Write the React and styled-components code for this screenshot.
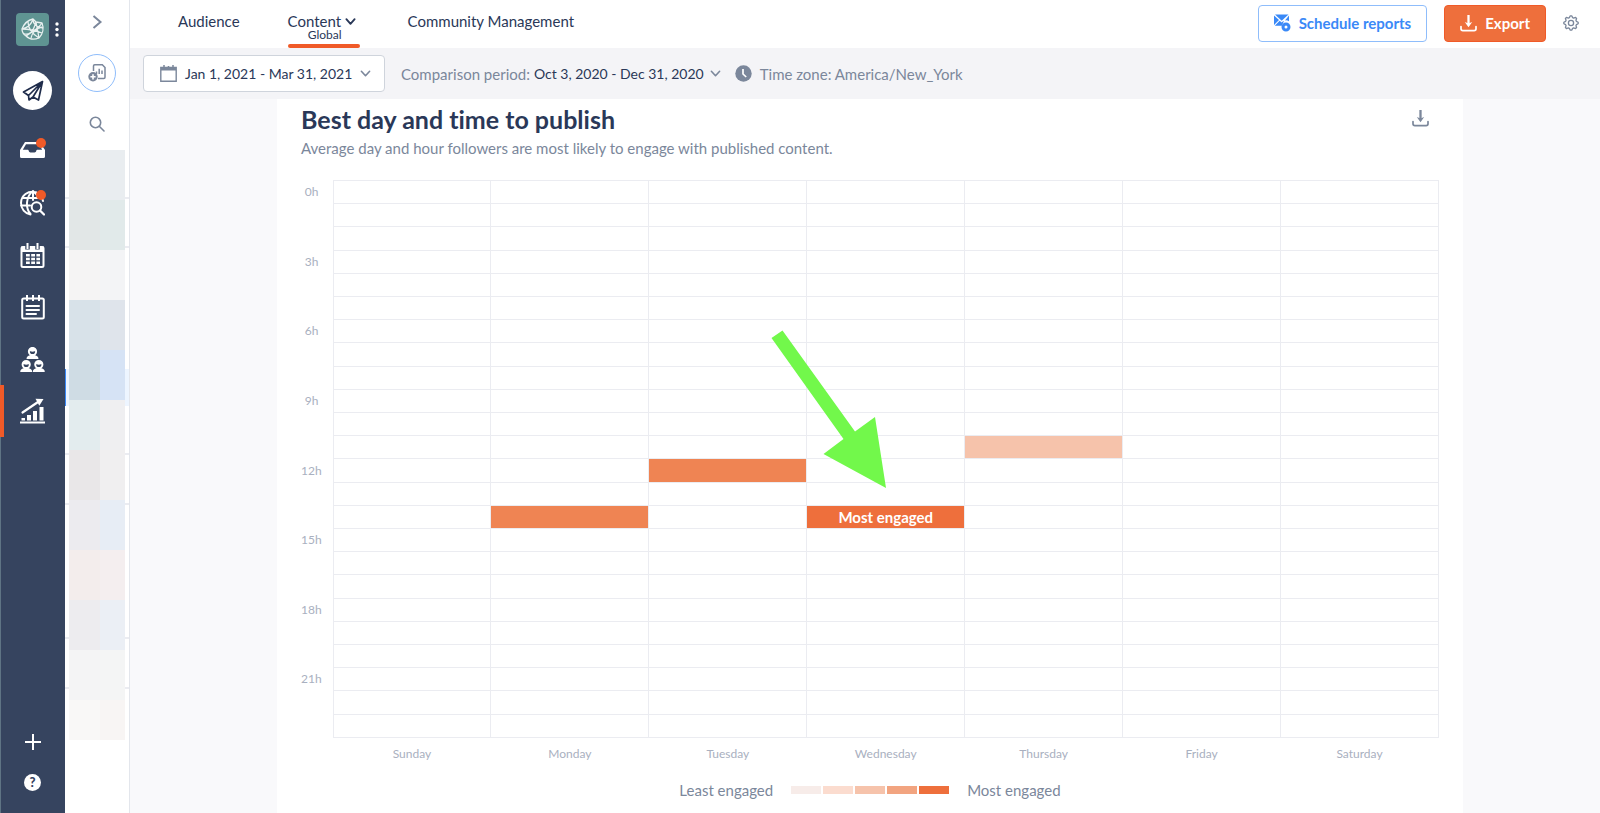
import React from "react";
import styled, { createGlobalStyle } from "styled-components";

const c = {
  navy: "#36445f",
  ink: "#2a3858",
  slate: "#7b879b",
  muted: "#a9b0c0",
  line: "#ebecf1",
  orange: "#ee6f3c",
  accent: "#f05a28",
  blue: "#3a89f7",
};

const GlobalStyle = createGlobalStyle`
  *, *::before, *::after { box-sizing: border-box; }
  body {
    margin: 0;
    background: #f9f9fb;
    color: ${c.ink};
    font-family: Lato, "Liberation Sans", sans-serif;
    font-size: 15px;
    line-height: 20px;
    font-variant-ligatures: none;
  }
  button {
    font: inherit;
    font-variant-ligatures: none;
    color: inherit;
    background: none;
    border: 0;
    padding: 0;
    white-space: nowrap;
    cursor: pointer;
  }
  a { color: inherit; text-decoration: none; }
  svg { display: block; flex: none; }
`;

const Shell = styled.div`
  display: flex;
  min-height: 100vh;
`;

/* ---------- primary rail ---------- */

const Rail = styled.nav`
  flex: none;
  width: 65px;
  display: flex;
  flex-direction: column;
  align-items: center;
  padding: 13px 0 22px;
  background: ${c.navy};
  box-shadow: inset 1px 0 #5f7484;
  color: #fff;
`;

const Brand = styled.div`
  display: grid;
  grid-template-columns: 1fr 33px 1fr;
  align-items: center;
  justify-items: center;
  width: 100%;
`;

const Logo = styled.button`
  grid-column: 2;
  width: 33px;
  height: 33px;
  display: grid;
  place-items: center;
  border-radius: 4px;
  background: #5f9492;
`;

const Compose = styled.button`
  width: 39px;
  height: 39px;
  margin: 25px 0 15px;
  display: grid;
  place-items: center;
  border-radius: 50%;
  background: #fff;
`;

const RailLink = styled.a`
  position: relative;
  width: 100%;
  height: 52px;
  display: grid;
  place-items: center;

  &::before {
    content: "";
    display: ${(p) => (p.$active ? "block" : "none")};
    position: absolute;
    left: 0;
    top: 0;
    width: 4px;
    height: 100%;
    background: ${c.accent};
  }
`;

const IconBox = styled.span`
  position: relative;
`;

const Dot = styled.span`
  position: absolute;
  top: ${(p) => (p.$raised ? -3 : 0)}px;
  right: -1px;
  width: 10px;
  height: 10px;
  border-radius: 50%;
  background: ${c.accent};
`;

const RailFoot = styled.div`
  margin-top: auto;
  display: flex;
  flex-direction: column;
  align-items: center;
  gap: 24px;
`;

const Help = styled.button`
  width: 17px;
  height: 17px;
  border-radius: 50%;
  background: #fff;
  color: ${c.navy};
  font-size: 13px;
  font-weight: 900;
  line-height: 17px;
`;

/* ---------- profile rail ---------- */

const Profiles = styled.aside`
  flex: none;
  width: 65px;
  display: flex;
  flex-direction: column;
  align-items: center;
  padding-top: 14px;
  background: #fff;
  border-right: 1px solid #e3e6ec;
  color: ${c.slate};
`;

const RoundButton = styled.button`
  width: 38px;
  height: 38px;
  margin: 24px 0;
  display: grid;
  place-items: center;
  border: 1px solid #8fbdfb;
  border-radius: 50%;
`;

const ProfileList = styled.div`
  position: relative;
  width: 100%;
  margin-top: 18px;
`;

const ProfileSlot = styled.div`
  height: ${(p) => p.$height}px;
  border-bottom: ${(p) => (p.$line ? `2px solid ${c.line}` : "0")};
  border-left: ${(p) => (p.$active ? `1px solid ${c.blue}` : "0")};
  background: ${(p) => (p.$active ? "#edf5ff" : "#fff")};
`;

const Mosaic = styled.div`
  position: absolute;
  top: 0;
  left: 4px;
  width: 56px;
  display: grid;
  grid-template-columns: 31px 25px;
  grid-auto-rows: 50px;
`;

const Tile = styled.span`
  height: ${(p) => (p.$short ? 40 : 50)}px;
  background: ${(p) => p.$color};
`;

/* ---------- header ---------- */

const Page = styled.div`
  flex: 1;
  min-width: 0;
  display: flex;
  flex-direction: column;
`;

const Header = styled.header`
  height: 48px;
  display: flex;
  justify-content: space-between;
  padding: 0 21px 0 48px;
  background: #fff;
`;

const Tabs = styled.nav`
  display: flex;
  gap: 48px;
`;

const Tab = styled.a`
  display: flex;
  flex-direction: column;
  padding-top: 11px;
  border-bottom: 4px solid transparent;
`;

const ActiveTab = styled(Tab)`
  position: relative;
  width: 72px;

  &::after {
    content: "";
    position: absolute;
    left: 0;
    right: 0;
    bottom: -4px;
    height: 4px;
    border-radius: 2px;
    background: ${c.accent};
  }
`;

const TabLabel = styled.span`
  display: flex;
  align-items: center;
  gap: 4px;
`;

const TabNote = styled.small`
  padding-right: 18px;
  margin-top: -2px;
  text-align: right;
  font-size: 12px;
  line-height: 12px;
`;

const Actions = styled.div`
  display: flex;
  align-items: center;
  padding-bottom: 2px;
`;

const ActionButton = styled.button`
  height: 37px;
  display: flex;
  align-items: center;
  gap: 8px;
  padding: 0 15px;
  border: 1px solid ${(p) => (p.$primary ? c.accent : "#8fbdfb")};
  border-radius: 4px;
  margin-right: 17px;
  background: ${(p) => (p.$primary ? c.orange : "#fff")};
  color: ${(p) => (p.$primary ? "#fff" : c.blue)};
  font-weight: 700;
`;

const Gear = styled.button`
  color: ${c.slate};
`;

/* ---------- filter bar ---------- */

const Filters = styled.div`
  height: 51px;
  display: flex;
  align-items: center;
  padding-left: 13px;
  background: #f4f4f7;
  color: ${c.slate};
`;

const DateButton = styled.button`
  width: 242px;
  height: 37px;
  display: flex;
  align-items: center;
  gap: 8px;
  padding: 0 16px;
  margin-right: 16px;
  border: 1px solid #cfd4dc;
  border-radius: 4px;
  background: #fff;
  color: ${c.ink};
  font-size: 14px;

  svg { color: ${c.slate}; }
  svg:last-child { margin-left: auto; }
`;

const Comparison = styled.button`
  display: flex;
  align-items: center;
  gap: 4px;
  margin-right: 14px;
  color: ${c.slate};

  b {
    margin-right: 2px;
    color: ${c.ink};
    font-size: 14px;
    font-weight: 400;
  }
`;

const Zone = styled.div`
  display: flex;
  align-items: center;
  gap: 8px;
`;

/* ---------- report card ---------- */

const Main = styled.main`
  flex: 1;
  display: flex;
  padding: 0 137px 0 147px;
`;

const Card = styled.section`
  flex: 1;
  min-width: 0;
  padding: 4px 24px 12px;
  background: #fff;
`;

const CardHead = styled.div`
  display: flex;
  justify-content: space-between;
  align-items: flex-start;
`;

const Title = styled.h1`
  margin: 0;
  font-size: 25px;
  line-height: 32px;
  font-weight: 700;
`;

const Subtitle = styled.p`
  margin: 3px 0 0;
  color: ${c.slate};
`;

const Download = styled.button`
  padding: 7px 10px;
  color: ${c.slate};
`;

const Heatmap = styled.table`
  width: 100%;
  height: 582px;
  margin-top: 22px;
  table-layout: fixed;
  border-collapse: collapse;
  color: ${c.muted};
  font-size: 12px;
  line-height: 16px;
`;

const HourRow = styled.tr`
  height: 23px;
`;

const HourHead = styled.th`
  width: 32px;
  padding: 0 14px 0 0;
  text-align: right;
  font-weight: 400;
  white-space: nowrap;
`;

const DayHead = styled.th`
  height: 24px;
  padding: 8px 0 0;
  font-weight: 400;
`;

const Cell = styled.td`
  position: relative;
  padding: 0;
  border: 1px solid ${c.line};
  background: ${(p) => p.$fill || "transparent"};
  color: #fff;
  font-size: 15px;
  font-weight: 700;
  text-align: center;
`;

const Pointer = styled.svg`
  position: absolute;
  right: 50%;
  bottom: calc(100% + 18px);
  fill: #72f84b;
`;

const Column = styled.col`
  width: ${(p) => p.$width};
`;

const Legend = styled.div`
  display: flex;
  justify-content: center;
  align-items: center;
  gap: 18px;
  margin-top: 18px;
  color: ${c.slate};
`;

const Scale = styled.div`
  display: flex;
  gap: 2px;
`;

const Swatch = styled.span`
  width: 30px;
  height: 8px;
  background: ${(p) => p.$color};
`;

/* ---------- icons ---------- */

const Chevron = ({ size = 11, stroke = 2 }) => (
  <svg width={size} height={size} viewBox="0 0 12 12" fill="none" stroke="currentColor" strokeWidth={stroke} strokeLinecap="round" strokeLinejoin="round">
    <path d="M1.5 3.5 6 8.5l4.500-5" />
  </svg>
);

const LeafLogo = () => (
  <svg width="25" height="25" viewBox="0 0 25 25" fill="none" stroke="#e8f0f0" strokeWidth="1.300" strokeLinejoin="round">
    <path d="M2 12C4 7 8 3 13 2l3 3 6 1c2 5 1 11-3 15-5 2-10 1-13-2-3-2-4-4-4-7z" />
    <path d="M2 12c5-1 9-3 11-10M4 17c5 1 9-1 12-12M13 2c0 5 3 8 10 9M16 5l3 16M22 6c-3 5-8 8-16 13M8 5c0 5 3 11 11 16M2 12c7 0 15 2 20 4M11 21c1-5 5-9 11-11" />
  </svg>
);

const DotsIcon = () => (
  <svg width="4" height="15" viewBox="0 0 4 15" fill="#fff">
    <circle cx="2" cy="2" r="1.700" />
    <circle cx="2" cy="7.500" r="1.700" />
    <circle cx="2" cy="13" r="1.700" />
  </svg>
);

const PlaneIcon = () => (
  <svg width="22" height="22" viewBox="0 0 22 22" fill="none" stroke="#1f2c4b" strokeWidth="1.700" strokeLinejoin="round">
    <path d="M20.500 1.500 1.500 12l5 3.500zM20.500 1.500 6.500 15.500l.5 4.500 4-3zM20.500 1.500 11 17l5.500 3z" />
  </svg>
);

const InboxIcon = () => (
  <svg width="25" height="21" viewBox="0 0 25 21" fill="#fff">
    <path fillRule="evenodd" d="M5 1h14.500L25 9v6.500a1.500 1.500 0 0 1-1.500 1.500h-22A1.500 1.500 0 0 1 0 15.500V9zM6 3.200 2.800 8.800h4.700c.8 0 1 .4 1.200 1 .3 1 .9 1.600 1.800 1.600h4c.9 0 1.500-.6 1.800-1.600.2-.6.4-1 1.200-1h4.700L18.800 3.200z" />
  </svg>
);

const GlobeIcon = () => (
  <svg width="25" height="26" viewBox="0 0 25 26" fill="none" stroke="#fff" strokeWidth="2" strokeLinecap="round">
    <path d="M16 2.200C8 .2 1 5.500 1 13c0 6 4 10.500 9.500 11.500M13 1C6 6 5 18 10.500 24M13 1v9M13 1c3 2.300 4.500 4.600 5.200 7M2.500 8H20M1 15.500h9M22 8l1 3" />
    <circle cx="16.500" cy="17" r="4.800" />
    <path d="m20 20.500 4 4" strokeWidth="2.300" />
  </svg>
);

const CalendarIcon = () => (
  <svg width="25" height="25" viewBox="0 0 25 25">
    <rect x="1.500" y="4" width="22" height="20" rx="1.500" fill="none" stroke="#fff" strokeWidth="2" />
    <path d="M1 3.500h23V9H1z" fill="#fff" />
    <path d="M7.500 1v5.500M17.500 1v5.500" stroke={c.navy} strokeWidth="4.500" />
    <path d="M7.500 0v6M17.500 0v6" stroke="#fff" strokeWidth="2" />
    <path d="M6 12.200h14M6 16h14M6 19.800h14" stroke="#fff" strokeWidth="2.400" strokeDasharray="3.800 1.400" />
  </svg>
);

const NotesIcon = () => (
  <svg width="24" height="25" viewBox="0 0 24 25" fill="none" stroke="#fff" strokeWidth="2">
    <rect x="1.200" y="3.500" width="21.600" height="20" rx="1.500" />
    <path d="M6 0v6M12 0v6M18 0v6" />
    <path d="M5.500 11H18M5.500 15H18M5.500 19H15" strokeLinecap="round" />
  </svg>
);

const Person = ({ x, y }) => (
  <g transform={`translate(${x} ${y})`}>
    <path d="M-6 12c0-2.700 2-3.300 4-4h4c2 .7 4 1.300 4 4z" fill="#fff" />
    <circle cx="0" cy="4.500" r="3.600" fill={c.navy} stroke="#fff" strokeWidth="2" />
    <path d="M-4 3.500C-3 0 3 0 4 3.500 2 5-2 5-4 3.500z" fill="#fff" />
  </g>
);

const PeopleIcon = () => (
  <svg width="25" height="25" viewBox="0 0 25 25">
    <Person x={12.5} y={0} />
    <Person x={6.2} y={13} />
    <Person x={18.8} y={13} />
  </svg>
);

const ChartIcon = () => (
  <svg width="25" height="26" viewBox="0 0 25 26" fill="#fff">
    <path d="M0 23.500h25v2H0zM1.500 20h3.500v2.500H1.500zM7 17h4v5.500H7zM13 13h4v9.500h-4zM19.500 9h4v13.500h-4z" />
    <path d="M2.500 14.500 18 4" stroke="#fff" strokeWidth="2.200" strokeLinecap="round" />
    <path d="m15.500.8 8 .2-4.200 6.700z" />
  </svg>
);

const PlusIcon = () => (
  <svg width="16" height="16" viewBox="0 0 16 16" stroke="#fff" strokeWidth="2">
    <path d="M8 0v16M0 8h16" />
  </svg>
);

const AddReportIcon = () => (
  <svg width="18" height="18" viewBox="0 0 18 18" fill="none" stroke="currentColor" strokeWidth="1.500">
    <path d="M5.500 7V2A1.200 1.200 0 0 1 6.700.8h7.600L17 3.500v9.700a1.200 1.200 0 0 1-1.200 1.200H10" />
    <path d="M8.500 10V7.500M11.200 10V4.800M14 10V6.500" />
    <circle cx="5" cy="12.800" r="4.700" fill="currentColor" stroke="none" />
    <path d="M5 10.200v5.200M2.400 12.800h5.200" stroke="#fff" strokeWidth="1.600" />
  </svg>
);

const SearchIcon = () => (
  <svg width="16" height="16" viewBox="0 0 16 16" fill="none" stroke="currentColor" strokeWidth="1.600" strokeLinecap="round">
    <circle cx="6.500" cy="6.500" r="5.200" />
    <path d="m10.500 10.500 4.500 4.500" />
  </svg>
);

const MailPlusIcon = () => (
  <svg width="17" height="18" viewBox="0 0 17 18" fill="currentColor">
    <path d="M0 1.500 5 6 0 11zM1 .5h13.500L7.700 6.800zM15 1.500V7.200a5 5 0 0 0-4-.8zM5.700 6.700l2 1.700 1-.8 1.300-.6-2.200 4.800H.8z" />
    <path fillRule="evenodd" d="M12 8.500a4.500 4.500 0 1 1 0 9 4.500 4.500 0 0 1 0-9zm0 3a1.500 1.500 0 1 0 0 3 1.500 1.500 0 0 0 0-3z" />
  </svg>
);

const DownloadIcon = () => (
  <svg width="17" height="17" viewBox="0 0 17 17" fill="none" stroke="currentColor" strokeWidth="2">
    <path d="M1 11.500v2.300c0 1.200.7 1.900 1.900 1.900h11.200c1.200 0 1.900-.7 1.900-1.900v-2.300" strokeWidth="1.700" strokeLinecap="round" />
    <path d="M8.500 0v9.500" strokeWidth="2.300" />
    <path d="m4.800 7 3.700 5.200L12.200 7l-3.700 1.500z" fill="currentColor" stroke="none" />
  </svg>
);

const gearPath = (() => {
  const points = [];
  const teeth = 8;
  for (let i = 0; i < teeth * 4; i += 1) {
    const r = i % 4 < 2 ? 7.2 : 5.6;
    const a = ((i - 0.5) / (teeth * 4)) * Math.PI * 2;
    points.push(`${(8 + r * Math.cos(a)).toFixed(2)} ${(8 + r * Math.sin(a)).toFixed(2)}`);
  }
  return `M${points.join("L")}Z`;
})();

const GearIcon = () => (
  <svg width="16" height="16" viewBox="0 0 16 16" fill="none" stroke="currentColor" strokeWidth="1.300" strokeLinejoin="round">
    <path d={gearPath} />
    <circle cx="8" cy="8" r="2.600" />
  </svg>
);

const DateIcon = () => (
  <svg width="17" height="17" viewBox="0 0 17 17" fill="none" stroke="currentColor" strokeWidth="1.400">
    <path d="M.8 2.500h15.400v13.700H.8z" />
    <path d="M1 4h15" strokeWidth="3" />
    <path d="M4 0v5M13 0v5M8.500 1v3" strokeWidth="1.500" />
  </svg>
);

const ClockIcon = () => (
  <svg width="17" height="17" viewBox="0 0 17 17">
    <circle cx="8.500" cy="8.500" r="8.200" fill="currentColor" />
    <path d="M8 4v5l3.200 3" fill="none" stroke="#fff" strokeWidth="1.700" />
  </svg>
);

/* ---------- data ---------- */

const railItems = [
  { label: "Inbox", Icon: InboxIcon, alert: true, raised: true },
  { label: "Listening", Icon: GlobeIcon, alert: true },
  { label: "Planner", Icon: CalendarIcon },
  { label: "Notes", Icon: NotesIcon },
  { label: "Community", Icon: PeopleIcon },
  { label: "Analytics", Icon: ChartIcon, active: true },
];

const slots = [
  { height: 49, line: true },
  { height: 49, line: true },
  { height: 121 },
  { height: 37, active: true },
  { height: 49, line: true },
  { height: 50, line: true },
  { height: 134, line: true },
  { height: 50, line: true },
];

const tiles = [
  "#ebebeb", "#e9edf0", "#e2e7e7", "#e1eaea", "#f5f4f4", "#f3f4f6",
  "#d8e2e9", "#dfe4eb", "#cfdce4", "#d6e3f5", "#e3ecee", "#efeff1",
  "#e9e7e8", "#f0eff0", "#ecebef", "#e7edf5", "#f3edec", "#f4eeef",
  "#edecef", "#ebeff5", "#f4f4f5", "#f4f5f5", "#f9f8f7", "#f8f5f4",
];

const days = ["Sunday", "Monday", "Tuesday", "Wednesday", "Thursday", "Friday", "Saturday"];
const hours = Array.from({ length: 24 }, (_, h) => h);

const engagement = {
  "Thursday-11": { fill: "#f6c3ab" },
  "Tuesday-12": { fill: "#ef8453" },
  "Monday-14": { fill: "#ef8453" },
  "Wednesday-14": { fill: c.orange, label: "Most engaged" },
};

const scale = ["#f7ece9", "#fbdccf", "#f6c3ab", "#f2a480", c.orange];

const Arrow = () => (
  <Pointer width="115" height="158" viewBox="0 0 115 158" aria-hidden="true">
    <path d="M0.500 8 11.500 0.500 84 101.500 104 87 115 158 52.500 124 72.500 109z" />
  </Pointer>
);

export default function App() {
  return (
    <>
      <GlobalStyle />
      <Shell>
        <Rail aria-label="Primary">
          <Brand>
            <Logo aria-label="Workspace"><LeafLogo /></Logo>
            <DotsIcon />
          </Brand>
          <Compose aria-label="Publish"><PlaneIcon /></Compose>
          {railItems.map(({ label, Icon, alert, raised, active }) => (
            <RailLink key={label} href="#" aria-label={label} $active={active}>
              <IconBox>
                <Icon />
                {alert && <Dot $raised={raised} />}
              </IconBox>
            </RailLink>
          ))}
          <RailFoot>
            <button aria-label="Add"><PlusIcon /></button>
            <Help aria-label="Help">?</Help>
          </RailFoot>
        </Rail>

        <Profiles>
          <button aria-label="Expand profiles">
            <svg width="16" height="16" viewBox="0 0 16 16" fill="none" stroke="currentColor" strokeWidth="2">
              <path d="m4.500 2 7 6-7 6" />
            </svg>
          </button>
          <RoundButton aria-label="Add report"><AddReportIcon /></RoundButton>
          <button aria-label="Search"><SearchIcon /></button>
          <ProfileList>
            {slots.map((s, i) => (
              <ProfileSlot key={i} $height={s.height} $line={s.line} $active={s.active} />
            ))}
            <Mosaic>
              {tiles.map((color, i) => (
                <Tile key={i} $color={color} $short={i > 21} />
              ))}
            </Mosaic>
          </ProfileList>
        </Profiles>

        <Page>
          <Header>
            <Tabs aria-label="Reports">
              <Tab href="#">Audience</Tab>
              <ActiveTab href="#" aria-current="page">
                <TabLabel>Content <Chevron /></TabLabel>
                <TabNote>Global</TabNote>
              </ActiveTab>
              <Tab href="#">Community Management</Tab>
            </Tabs>
            <Actions>
              <ActionButton><MailPlusIcon />Schedule reports</ActionButton>
              <ActionButton $primary><DownloadIcon />Export</ActionButton>
              <Gear aria-label="Settings"><GearIcon /></Gear>
            </Actions>
          </Header>

          <Filters>
            <DateButton>
              <DateIcon />
              Jan 1, 2021 - Mar 31, 2021
              <Chevron stroke={1.7} />
            </DateButton>
            <Comparison>
              Comparison period: <b>Oct 3, 2020 - Dec 31, 2020</b>
              <Chevron stroke={1.7} />
            </Comparison>
            <Zone><ClockIcon />Time zone: America/New_York</Zone>
          </Filters>

          <Main>
            <Card>
              <CardHead>
                <div>
                  <Title>Best day and time to publish</Title>
                  <Subtitle>Average day and hour followers are most likely to engage with published content.</Subtitle>
                </div>
                <Download aria-label="Download"><DownloadIcon /></Download>
              </CardHead>
              <Heatmap>
                <colgroup>
                  <Column $width="32px" />
                  {days.map((d) => <Column key={d} $width="auto" />)}
                </colgroup>
                <tbody>
                  {hours.map((h) => (
                    <HourRow key={h}>
                      <HourHead scope="row">{h % 3 === 0 ? `${h}h` : ""}</HourHead>
                      {days.map((d) => {
                        const hit = engagement[`${d}-${h}`];
                        return (
                          <Cell key={d} $fill={hit?.fill}>
                            {hit?.label}
                            {hit?.label && <Arrow />}
                          </Cell>
                        );
                      })}
                    </HourRow>
                  ))}
                </tbody>
                <tfoot>
                  <tr>
                    <td />
                    {days.map((d) => <DayHead key={d} scope="col">{d}</DayHead>)}
                  </tr>
                </tfoot>
              </Heatmap>
              <Legend>
                Least engaged
                <Scale>
                  {scale.map((color) => <Swatch key={color} $color={color} />)}
                </Scale>
                Most engaged
              </Legend>
            </Card>
          </Main>
        </Page>
      </Shell>
    </>
  );
}
